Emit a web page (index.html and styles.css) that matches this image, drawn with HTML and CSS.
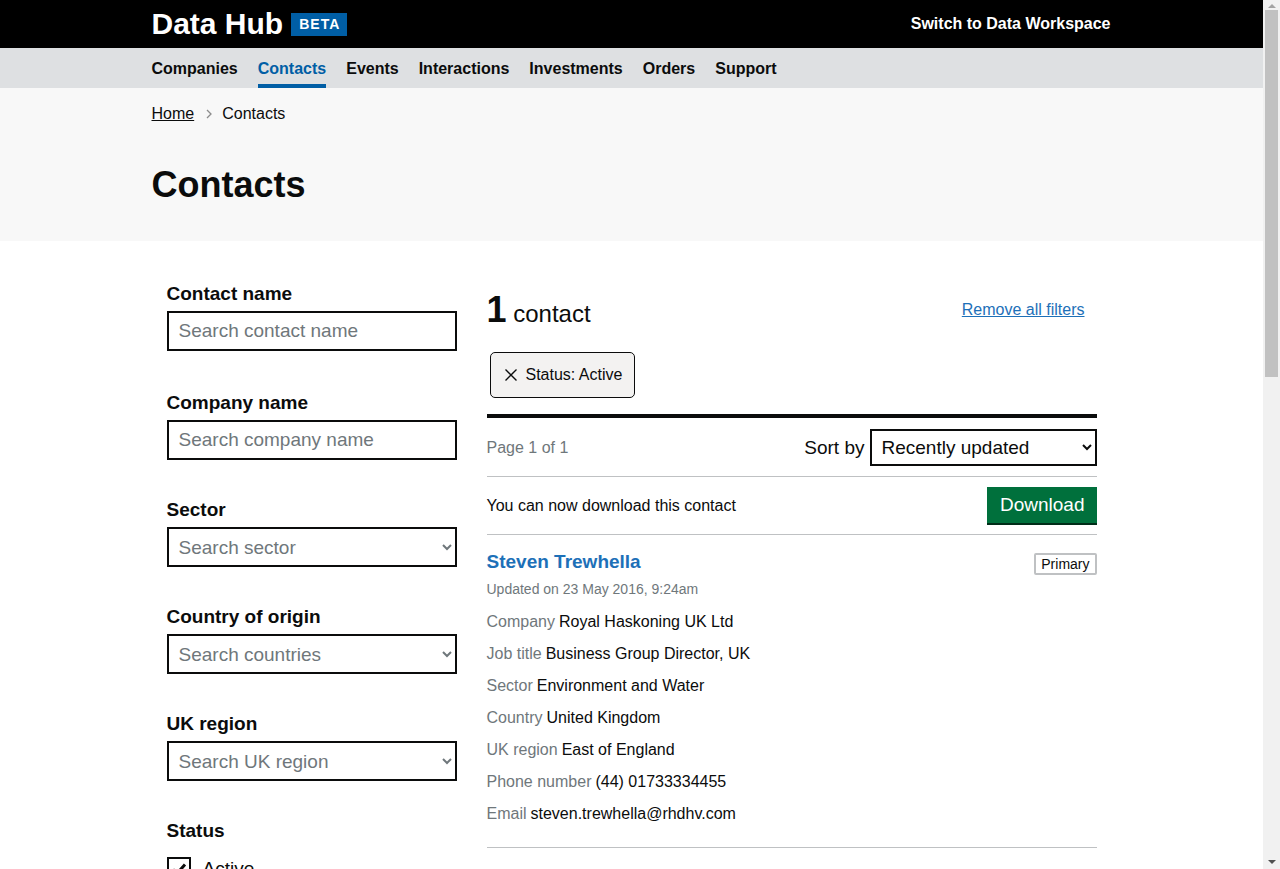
FILE: index.html
```html
<!DOCTYPE html>
<html lang="en">
<head>
<meta charset="utf-8">
<title>Contacts - Data Hub</title>
<link rel="stylesheet" href="styles.css">
</head>
<body>
<header class="header">
  <div class="container header-inner">
    <a class="logo" href="#">Data Hub <span class="tag">BETA</span></a>
    <a class="switch" href="#">Switch to Data Workspace</a>
  </div>
</header>
<nav class="nav">
  <ul class="container nav-list">
    <li><a href="#">Companies</a></li>
    <li><a href="#" class="active">Contacts</a></li>
    <li><a href="#">Events</a></li>
    <li><a href="#">Interactions</a></li>
    <li><a href="#">Investments</a></li>
    <li><a href="#">Orders</a></li>
    <li><a href="#">Support</a></li>
  </ul>
</nav>
<div class="local-header">
  <div class="container">
    <ol class="breadcrumbs">
      <li><a href="#">Home</a></li>
      <li class="sep"><svg width="8" height="12" viewBox="0 0 8 12"><path d="M2 2l4 4-4 4" fill="none" stroke="#8c8c8c" stroke-width="1.3"/></svg></li>
      <li>Contacts</li>
    </ol>
    <h1 class="page-title">Contacts</h1>
  </div>
</div>
<main class="container main">
  <div class="grid">
    <aside class="filters">
      <div class="field field-first">
        <label class="label">Contact name</label>
        <input class="input" type="text" placeholder="Search contact name">
      </div>
      <div class="field">
        <label class="label">Company name</label>
        <input class="input" type="text" placeholder="Search company name">
      </div>
      <div class="field">
        <label class="label">Sector</label>
        <select class="select placeholder"><option>Search sector</option></select>
      </div>
      <div class="field">
        <label class="label">Country of origin</label>
        <select class="select placeholder"><option>Search countries</option></select>
      </div>
      <div class="field">
        <label class="label">UK region</label>
        <select class="select placeholder"><option>Search UK region</option></select>
      </div>
      <div class="field">
        <span class="label">Status</span>
        <div class="checkbox checkbox-first">
          <span class="box checked"><svg width="20" height="20" viewBox="0 0 20 20"><path d="M4 10.5l4 4 8-9" fill="none" stroke="#0b0c0c" stroke-width="3"/></svg></span>
          <span class="check-label">Active</span>
        </div>
        <div class="checkbox">
          <span class="box"></span>
          <span class="check-label">Inactive</span>
        </div>
      </div>
    </aside>
    <section class="results">
      <div class="results-head">
        <h2 class="count"><span class="count-num">1</span> contact</h2>
        <a class="remove-all" href="#">Remove all filters</a>
      </div>
      <div class="chips">
        <button class="chip"><svg width="14" height="14" viewBox="0 0 14 14"><path d="M1.5 1.5l11 11M12.5 1.5l-11 11" stroke="#0b0c0c" stroke-width="1.4"/></svg>Status: Active</button>
      </div>
      <div class="sort-row">
        <span class="page-info">Page 1 of 1</span>
        <div class="sort">
          <label class="sort-label">Sort by</label>
          <select class="sort-select"><option>Recently updated</option></select>
        </div>
      </div>
      <div class="download-row">
        <span>You can now download this contact</span>
        <button class="btn">Download</button>
      </div>
      <article class="card">
        <div class="card-head">
          <a class="card-title" href="#">Steven Trewhella</a>
          <span class="badge">Primary</span>
        </div>
        <p class="updated">Updated on 23 May 2016, 9:24am</p>
        <dl class="details">
          <div class="row"><dt>Company</dt><dd>Royal Haskoning UK Ltd</dd></div>
          <div class="row"><dt>Job title</dt><dd>Business Group Director, UK</dd></div>
          <div class="row"><dt>Sector</dt><dd>Environment and Water</dd></div>
          <div class="row"><dt>Country</dt><dd>United Kingdom</dd></div>
          <div class="row"><dt>UK region</dt><dd>East of England</dd></div>
          <div class="row"><dt>Phone number</dt><dd>(44) 01733334455</dd></div>
          <div class="row"><dt>Email</dt><dd>steven.trewhella@rhdhv.com</dd></div>
        </dl>
      </article>
    </section>
  </div>
</main>
<footer class="footer">
  <div class="container footer-inner">
    <span>Data Hub</span>
  </div>
</footer>
<div class="scrollbar" aria-hidden="true">
  <span class="sb-arrow sb-up"></span>
  <span class="sb-thumb"></span>
  <span class="sb-arrow sb-down"></span>
</div>
</body>
</html>
```
FILE: styles.css
```css
* { box-sizing: border-box; }
html, body { margin: 0; padding: 0; }
body {
  font-family: "Liberation Sans", Arial, sans-serif;
  color: #0b0c0c;
  background: #fff;
  margin-right: 17px;
}
a { color: inherit; }
.container { width: 960px; margin: 0 auto; }

/* window scrollbar drawn over the page's right edge */
.scrollbar {
  position: fixed; top: 0; right: 0; width: 17px; height: 100vh;
  background: #f1f1f1; display: flex; flex-direction: column; align-items: center;
}
.sb-arrow { width: 0; height: 0; border-left: 4px solid transparent; border-right: 4px solid transparent; }
.sb-up { border-bottom: 4px solid #a3a3a3; margin-top: 4px; }
.sb-down { border-top: 4px solid #505050; margin-bottom: 5px; }
.sb-thumb { width: 13px; height: 367px; background: #c1c1c1; margin-top: 2px; margin-bottom: auto; }

/* header */
.header { background: #000; height: 48px; }
.header-inner { height: 48px; display: flex; align-items: center; justify-content: space-between; }
.logo { color: #fff; text-decoration: none; font-weight: 700; font-size: 30px; display: flex; align-items: center; gap: 8px; }
.tag { background: #005ea5; color: #fff; font-size: 14px; letter-spacing: 1px; padding: 3px 7px 3px 8px; line-height: 17px; }
.switch { color: #fff; text-decoration: none; font-weight: 700; font-size: 16px; margin-right: 1px; margin-top: -1px; }

/* nav */
.nav { background: #dee0e2; height: 40px; }
.nav-list { list-style: none; padding: 0; display: flex; gap: 20px; height: 40px; margin-top: 0; margin-bottom: 0; }
.nav-list li { display: flex; }
.nav-list a { text-decoration: none; font-weight: 700; font-size: 16px; color: #0b0c0c; padding-top: 12px; height: 40px; border-bottom: 4px solid transparent; }
.nav-list a.active { color: #005ea5; border-bottom-color: #005ea5; }

/* local header */
.local-header { background: #f8f8f8; height: 153px; padding-top: 16px; }
.breadcrumbs { list-style: none; margin: 0; padding: 0; display: flex; align-items: center; font-size: 16px; line-height: 20px; }
.breadcrumbs a { color: #0b0c0c; text-decoration: underline; }
.breadcrumbs .sep { margin: 0 9px 0 11px; display: flex; }
.page-title { margin: 41px 0 0; font-size: 36px; line-height: 40px; font-weight: 700; }

/* main */
.main { padding-top: 40px; min-height: 1700px; }
.grid { display: grid; grid-template-columns: 1fr 2fr; }
.filters, .results { padding: 0 15px; }

.field { margin-bottom: 37px; }
.field-first { margin-bottom: 39px; }
.label { display: block; font-weight: 700; font-size: 19px; line-height: 25px; margin-bottom: 5px; }
.input, .select {
  display: block; width: 100%; height: 40px;
  border: 2px solid #0b0c0c; border-radius: 0;
  font-family: "Liberation Sans", Arial, sans-serif; font-size: 19px;
  padding: 5px 10px; background: #fff; color: #0b0c0c;
}
.select { padding-left: 6px; }
.input::placeholder { color: #6f777b; }
.select.placeholder { color: #6f777b; }
.checkbox { display: flex; align-items: center; gap: 12px; margin-bottom: 14px; }
.checkbox-first { margin-top: 14px; }
.box { width: 24px; height: 24px; border: 2px solid #0b0c0c; display: flex; align-items: center; justify-content: center; }
.check-label { font-size: 19px; }

/* results */
.results-head { display: flex; justify-content: space-between; align-items: center; height: 58px; padding-top: 10px; }
.count { margin: -6px 0 0; font-weight: 400; font-size: 24px; line-height: 40px; }
.count-num { font-weight: 700; font-size: 36px; }
.remove-all { color: #1d70b8; font-size: 16px; margin-right: 12px; margin-top: -10px; }

.chips { padding: 13px 0 16px 3px; }
.chip {
  display: inline-flex; align-items: center; gap: 8px;
  height: 46px; padding: 0 12px 0 13px;
  background: #f3f2f1; border: 1px solid #0b0c0c; border-radius: 5px;
  font-family: "Liberation Sans", Arial, sans-serif; font-size: 16px; color: #0b0c0c;
}

.sort-row {
  border-top: 4px solid #0b0c0c; border-bottom: 1px solid #bfc1c3;
  display: flex; justify-content: space-between; align-items: center;
  padding: 11px 0 10px;
}
.page-info { color: #6f777b; font-size: 16px; }
.sort { display: flex; align-items: center; gap: 5px; }
.sort-label { font-size: 19px; }
.sort-select {
  width: 227px; height: 37px; border: 2px solid #0b0c0c; border-radius: 0;
  font-family: "Liberation Sans", Arial, sans-serif; font-size: 19px; padding: 0 6px; background: #fff; color: #0b0c0c;
}

.download-row {
  display: flex; justify-content: space-between; align-items: center;
  padding: 10px 0 9px; border-bottom: 1px solid #bfc1c3; font-size: 16px;
}
.btn {
  background: #00703c; color: #fff; border: 0; border-radius: 0;
  box-shadow: 0 2px 0 #002d18; height: 36px; padding: 0 12px 0 13px;
  font-family: "Liberation Sans", Arial, sans-serif; font-size: 19px; margin-bottom: 2px;
}

.card { padding: 14px 0 23px; border-bottom: 1px solid #bfc1c3; }
.card-head { display: flex; justify-content: space-between; align-items: flex-start; }
.card-title { color: #1d70b8; font-weight: 700; font-size: 19px; line-height: 25px; text-decoration: none; }
.badge { border: 2px solid #bfc1c3; border-radius: 2px; font-size: 14px; padding: 2px 5px; line-height: 14px; margin-top: 4px; }
.updated { margin: 4px 0 13px; color: #6f777b; font-size: 14px; line-height: 20px; }
.details { margin: 0; }
.row { display: flex; gap: 4px; font-size: 16px; line-height: 20px; margin-bottom: 12px; }
.row:last-child { margin-bottom: 0; }
.row dt { color: #6f777b; }
.row dd { margin: 0; }

.footer { background: #dee0e2; border-top: 1px solid #a1acb2; padding: 40px 0; }
.footer-inner { font-size: 16px; padding: 0 15px; }
```
